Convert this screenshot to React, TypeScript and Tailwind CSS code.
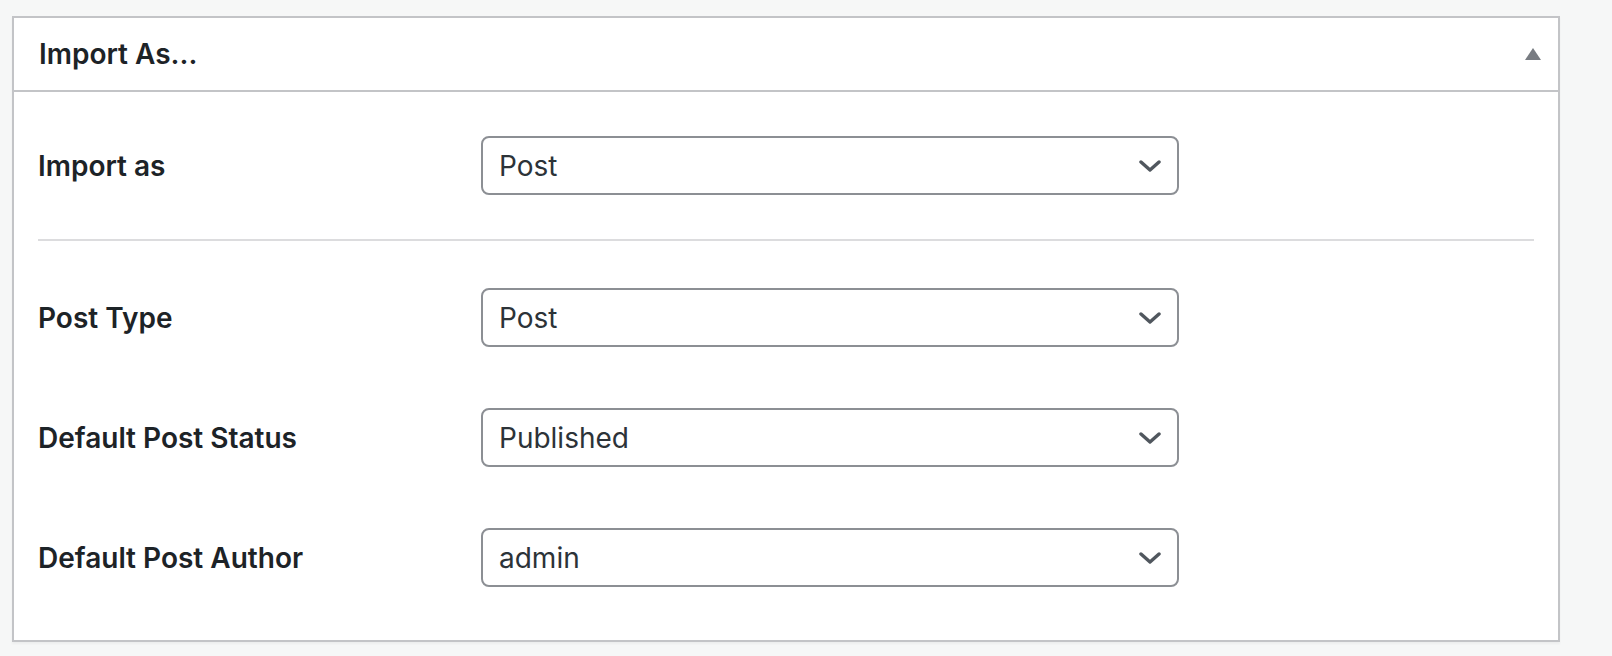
import React from "react";

const ROWS = [
  { label: "Post Type", value: "Post" },
  { label: "Default Post Status", value: "Published" },
  { label: "Default Post Author", value: "admin" },
];

function Chevron() {
  return (
    <svg width="22" height="12" viewBox="0 0 22 12" className="shrink-0">
      <polyline
        points="2,2 11,10 20,2"
        fill="none"
        stroke="#50575e"
        strokeWidth="3.4"
        strokeLinecap="round"
        strokeLinejoin="round"
      />
    </svg>
  );
}

function SelectBox({ value }: { value: string }) {
  return (
    <div className="w-[698px] h-[59px] shrink-0 flex items-center justify-between pl-[16px] pr-[16px] border-2 border-[#8c8f94] rounded-[8px] bg-white">
      <span className="text-[28px] leading-none text-[#2c3338]">{value}</span>
      <Chevron />
    </div>
  );
}

function Row({ label, value }: { label: string; value: string }) {
  return (
    <div className="flex items-center">
      <div className="w-[443px] shrink-0 text-[28px] font-semibold leading-none text-[#1d2327]">
        {label}
      </div>
      <SelectBox value={value} />
    </div>
  );
}

export default function App() {
  return (
    <div
      className="w-full h-screen bg-[#f6f7f7] pt-[16px] pl-[12px]"
      style={{ fontFamily: "Inter, 'Noto Sans', sans-serif" }}
    >
      <div className="w-[1548px] border-2 border-[#c3c4c7] bg-white shadow-[0_2px_2px_rgba(0,0,0,0.04)]">
        {/* header */}
        <div className="h-[74px] flex items-center justify-between pl-[25px] pr-[17px] border-b-2 border-[#c3c4c7]">
          <h2 className="text-[28px] font-semibold leading-none text-[#1d2327]">
            Import As...
          </h2>
          <svg width="16" height="12" viewBox="0 0 16 12">
            <polygon points="8,0 16,12 0,12" fill="#787c82" />
          </svg>
        </div>

        {/* body */}
        <div className="px-[24px]">
          <div className="pt-[44px] pb-[44px]">
            <Row label="Import as" value="Post" />
          </div>
          <div className="h-[2px] bg-[#dcdcde]" />
          <div className="pt-[47px] pb-[53px] flex flex-col gap-[61px]">
            {ROWS.map((r) => (
              <Row key={r.label} label={r.label} value={r.value} />
            ))}
          </div>
        </div>
      </div>
    </div>
  );
}
